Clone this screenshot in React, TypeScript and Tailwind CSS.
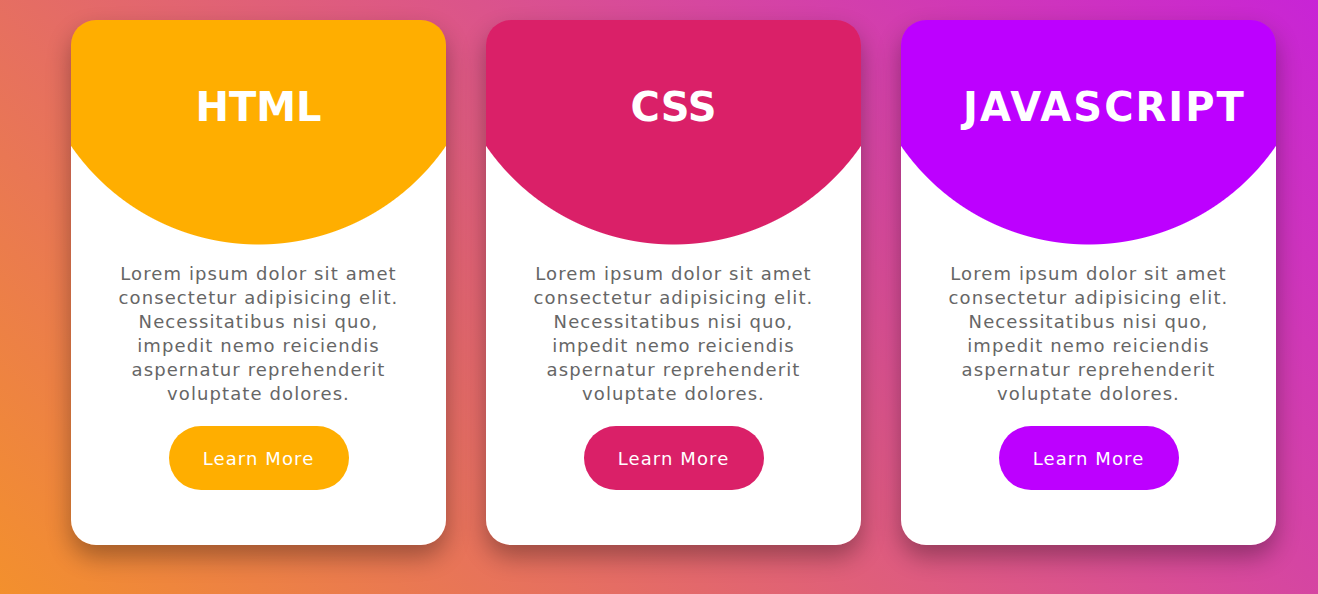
import React from "react";

type Card = { title: string; bg: string; btn: string; tracking: string };

const cards: Card[] = [
  {
    title: "HTML",
    bg: "bg-[radial-gradient(circle_at_50%_-3px,#ffae00_227px,#ffffff_228px)]",
    btn: "bg-[#ffae00]",
    tracking: "tracking-normal",
  },
  {
    title: "CSS",
    bg: "bg-[radial-gradient(circle_at_50%_-3px,#da2068_227px,#ffffff_228px)]",
    btn: "bg-[#da2068]",
    tracking: "tracking-normal",
  },
  {
    title: "JAVASCRIPT",
    bg: "bg-[radial-gradient(circle_at_50%_-3px,#bd00ff_227px,#ffffff_228px)]",
    btn: "bg-[#bd00ff]",
    tracking: "tracking-[2px]",
  },
];

export default function App() {
  return (
    <div
      className="flex h-[594px] w-full gap-[40px] bg-[linear-gradient(45deg,#f3902d_0%,#c824d6_100%)] pl-[71px] pt-[20px]"
      style={{ fontFamily: '"DejaVu Sans", Verdana, sans-serif' }}
    >
      {cards.map((c) => (
        <div
          key={c.title}
          className={`flex h-[525px] w-[375px] flex-col items-center rounded-[25px] shadow-[0_12px_24px_rgba(0,0,0,0.32)] ${c.bg}`}
        >
          <h2
            className={`w-[251px] whitespace-nowrap pt-[63px] text-center text-[40px] font-bold leading-[48px] text-white ${c.tracking}`}
          >
            {c.title}
          </h2>
          <p className="mt-[131px] w-[295px] text-center text-[18px] leading-[24px] tracking-[1.1px] text-[#666666]">
            Lorem ipsum dolor sit amet consectetur adipisicing elit.
            Necessitatibus nisi quo, impedit nemo reiciendis aspernatur
            reprehenderit voluptate dolores.
          </p>
          <button
            className={`mt-[20px] h-[64px] w-[180px] rounded-full text-[18px] tracking-[1.1px] text-white ${c.btn}`}
          >
            Learn More
          </button>
        </div>
      ))}
    </div>
  );
}
